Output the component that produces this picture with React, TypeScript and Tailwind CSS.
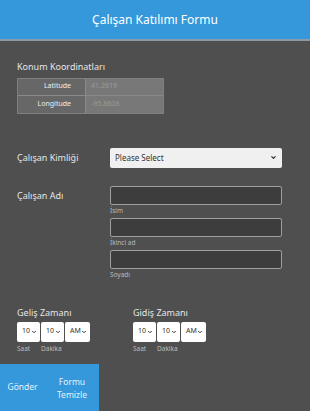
import { ChevronDown } from "lucide-react";

const font = { fontFamily: '"Noto Sans", "Open Sans", sans-serif' };

function TimeSelect({ value, w }: { value: string; w: string }) {
  return (
    <div
      className={`flex h-[20px] ${w} items-center justify-between rounded-[2px] bg-white pl-[5px] pr-[3px] text-[7px] text-[#333]`}
    >
      <span>{value}</span>
      <ChevronDown size={6} strokeWidth={4} className="text-[#333]" />
    </div>
  );
}

function TimeGroup({ title }: { title: string }) {
  return (
    <div className="flex flex-col">
      <div className="mb-[3px] text-[9px] leading-[12px] text-[#e6e6e6]">{title}</div>
      <div className="flex gap-[1px]">
        <TimeSelect value="10" w="w-[23px]" />
        <TimeSelect value="10" w="w-[23px]" />
        <TimeSelect value="AM" w="w-[25px]" />
      </div>
      <div className="mt-[2px] flex text-[6.5px] leading-[9px] text-[#bbb]">
        <span className="w-[24px]">Saat</span>
        <span>Dakika</span>
      </div>
    </div>
  );
}

export default function App() {
  return (
    <div className="flex h-[411px] w-[310px] flex-col bg-[#4f4f4f]" style={font}>
      <div className="flex h-[41px] items-center justify-center border-b-[2px] border-[#8a9aa6] bg-[#3498db] text-[12px] text-white">
        Çalışan Katılımı Formu
      </div>

      <div className="px-[17px] pt-[19px]">
        <div className="text-[9px] text-[#e6e6e6]">Konum Koordinatları</div>
        <div className="mt-[4px] flex w-[147px] flex-col border border-[#808080] text-[7px]">
          <div className="flex h-[17px] border-b border-[#8a8a8a]">
            <div className="flex w-[67px] items-center justify-end bg-[#676767] pr-[14px] text-[#eee]">
              Latitude
            </div>
            <div className="flex flex-1 items-center border-l border-[#8a8a8a] bg-[#787878] pl-[5px] text-[#9a9a9a]">
              41.2619
            </div>
          </div>
          <div className="flex h-[17px]">
            <div className="flex w-[67px] items-center justify-end bg-[#676767] pr-[14px] text-[#eee]">
              Longitude
            </div>
            <div className="flex flex-1 items-center border-l border-[#8a8a8a] bg-[#787878] pl-[5px] text-[#9a9a9a]">
              -95.8608
            </div>
          </div>
        </div>
      </div>

      <div className="mt-[34px] flex items-center px-[17px]">
        <div className="w-[93px] text-[9px] text-[#e6e6e6]">Çalışan Kimliği</div>
        <div className="flex h-[20px] w-[172px] items-center justify-between rounded-[2px] bg-[#f0f0f0] pl-[5px] pr-[5px] text-[8px] text-[#333]">
          <span>Please Select</span>
          <ChevronDown size={7} strokeWidth={4} className="text-[#333]" />
        </div>
      </div>

      <div className="mt-[18px] flex px-[17px]">
        <div className="w-[93px] pt-[3px] text-[9px] text-[#e6e6e6]">Çalışan Adı</div>
        <div className="flex flex-col">
          {["İsim", "İkinci ad", "Soyadı"].map((lbl) => (
            <div key={lbl} className="flex flex-col">
              <div className="h-[19px] w-[172px] rounded-[2px] border border-[#a0a0a0] bg-[#3d3d3d]" />
              <div className="mb-[3px] mt-[2px] text-[6.5px] leading-[8px] text-[#bbb]">{lbl}</div>
            </div>
          ))}
        </div>
      </div>

      <div className="mt-[25px] flex gap-[43px] px-[17px]">
        <TimeGroup title="Geliş Zamanı" />
        <TimeGroup title="Gidiş Zamanı" />
      </div>

      <div className="mt-auto flex h-[47px] w-[99px] bg-[#3498db] text-[8.5px] text-[#e8f2fa]">
        <button className="flex w-[45px] items-center justify-center">Gönder</button>
        <button className="flex flex-1 items-center justify-center text-center leading-[13px]">
          Formu
          <br />
          Temizle
        </button>
      </div>
    </div>
  );
}
